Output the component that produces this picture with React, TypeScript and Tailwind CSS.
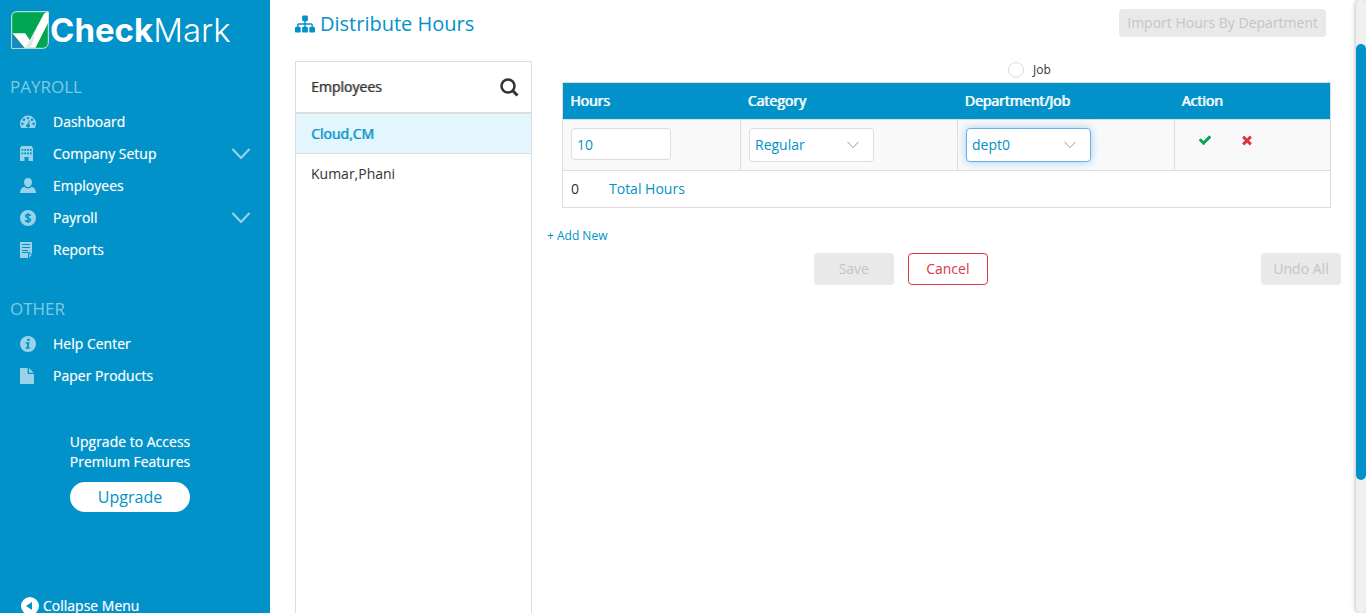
import { useState, type ReactNode } from "react";

const CHECK =
  "M1671 566q0 40-28 68l-724 724-136 136q-28 28-68 28t-68-28l-136-136-362-362q-28-28-28-68t28-68l136-136q28-28 68-28t68 28l294 295 656-657q28-28 68-28t68 28l136 136q28 28 28 68z";
const TIMES =
  "M1490 1322q0 40-28 68l-136 136q-28 28-68 28t-68-28l-294-294-294 294q-28 28-68 28t-68-28l-136-136q-28-28-28-68t28-68l294-294-294-294q-28-28-28-68t28-68l136-136q28-28 68-28t68 28l294 294 294-294q28-28 68-28t68 28l136 136q28 28 28 68t-28 68l-294 294 294 294q28 28 28 68z";
const SITEMAP =
  "M1792 1248v320q0 40-28 68t-68 28h-320q-40 0-68-28t-28-68v-320q0-40 28-68t68-28h96v-192h-512v192h96q40 0 68 28t28 68v320q0 40-28 68t-68 28h-320q-40 0-68-28t-28-68v-320q0-40 28-68t68-28h96v-192h-512v192h96q40 0 68 28t28 68v320q0 40-28 68t-68 28h-320q-40 0-68-28t-28-68v-320q0-40 28-68t68-28h96v-192q0-52 38-90t90-38h512v-192h-96q-40 0-68-28t-28-68v-320q0-40 28-68t68-28h320q40 0 68 28t28 68v320q0 40-28 68t-68 28h-96v192h512q52 0 90 38t38 90v192h96q40 0 68 28t28 68z";

function Glyph({ d, className }: { d: string; className: string }) {
  return (
    <svg viewBox="0 0 1792 1792" fill="currentColor" aria-hidden="true" className={className}>
      <path d={d} />
    </svg>
  );
}

function Chevron({ className }: { className: string }) {
  return (
    <svg viewBox="0 0 18 12" fill="none" stroke="currentColor" strokeLinecap="round" strokeLinejoin="round" aria-hidden="true" className={className}>
      <path d="M1 1.5l8 8.5 8-8.5" />
    </svg>
  );
}

function NavIcon({ children }: { children: ReactNode }) {
  return (
    <svg viewBox="0 0 16 16" aria-hidden="true" className="size-4 shrink-0 text-[#99d3e9]" fill="currentColor">
      {children}
    </svg>
  );
}

const INK = "#0092c9";

const dashboardIcon = (
  <NavIcon>
    <path d="M8 1.6A8 8 0 0 0 0 9.6c0 1.7.5 3.2 1.3 4.5h13.4A8.300 8.300 0 0 0 16 9.600a8 8 0 0 0-8-8z" />
    <g fill={INK}>
      <circle cx="2.4" cy="9.7" r="1.2" />
      <circle cx="4" cy="5.8" r="1.2" />
      <circle cx="8" cy="4.1" r="1.2" />
      <circle cx="12" cy="5.8" r="1.2" />
      <circle cx="13.6" cy="9.7" r="1.2" />
      <path d="M9 6.200l.9.200-.8 3.700a1.900 1.900 0 1 1-1.200-.3z" />
    </g>
  </NavIcon>
);
const companyIcon = (
  <NavIcon>
    <path d="M1 0h11v1.500h1V15H8.500v-4h-4v4H0V1.500h1z" />
    <g fill={INK}>
      <path d="M1.500 3h1.800v1.700H1.500zM4.300 3h1.800v1.700H4.300zM7.100 3h1.800v1.700H7.100zM9.900 3h1.800v1.700H9.900zM1.500 6.500h1.800v1.700H1.500zM4.300 6.500h1.800v1.700H4.300zM7.100 6.500h1.800v1.700H7.100zM9.900 6.500h1.800v1.700H9.900z" />
    </g>
  </NavIcon>
);
const personIcon = (
  <NavIcon>
    <path d="M8 0C5.600 0 4 1.600 4 4.200 4 6.800 5.700 9 8 9s4-2.200 4-4.800C12 1.600 10.400 0 8 0zM4.300 8.800C1.800 9.500.3 11.500 0 15h16c-.3-3.500-1.800-5.500-4.300-6.200C10.700 9.800 9.500 10.300 8 10.300s-2.700-.5-3.700-1.500z" />
  </NavIcon>
);
const dollarIcon = (
  <NavIcon>
    <circle cx="8" cy="8" r="8" />
    <path d="M10.500 6c-.3-1-1.200-1.600-2.500-1.600S5.600 5 5.600 6.100C5.600 8.600 10.500 7.200 10.500 9.900c0 1.100-1.100 1.700-2.500 1.700s-2.500-.6-2.700-1.700M8 3v10" fill="none" stroke={INK} strokeWidth="1.5" />
  </NavIcon>
);
const reportIcon = (
  <NavIcon>
    <path d="M0 0h12v11.500H8V16H0zM9 12.500h3.200L9 15.800z" />
    <path d="M2 2.500h8M2 5.500h8M2 8.500h6M2 10.500h8" stroke={INK} fill="none" />
  </NavIcon>
);
const infoIcon = (
  <NavIcon>
    <circle cx="8" cy="8" r="8" />
    <path d="M7.300 2.800h2.400v2.300H7.300zM5.800 6.300h3.700l-.9 4.900h1.200v1.500H5.700v-1.500h1l.6-3.400H5.800z" fill={INK} />
  </NavIcon>
);
const paperIcon = (
  <NavIcon>
    <path d="M1 0h6.700v6H14v9.200a.8.800 0 0 1-.8.800H.8a.8.800 0 0 1-.8-.8V1a1 1 0 0 1 1-1zM9 0l4.700 4.800H9z" />
  </NavIcon>
);

function NavItem({ icon, label, expandable }: { icon: ReactNode; label: string; expandable?: boolean }) {
  return (
    <li>
      <a href="#" className="flex h-8 items-center pr-5 pl-5">
        {icon}
        <span className="ml-[17px] flex-1 [text-shadow:0_0_1px_rgba(255,255,255,0.5)]">{label}</span>
        {expandable && <Chevron className="h-3 w-[18px] stroke-2 text-[#99d3e9]" />}
      </a>
    </li>
  );
}

function Logo() {
  return (
    <a href="#" aria-label="CheckMark" className="flex h-[38px] items-center pl-[11px]">
      <svg viewBox="0 0 38 38" aria-hidden="true" className="size-[38px] shrink-0">
        <path d="M6 .7h31.300V31c0 4-2 6.300-6 6.300H.7V6C.7 2.500 2.500.7 6 .7z" fill="#00a651" stroke="#d5f0e0" />
        <path d="M1.200 23v13.800H13z" fill="#1b87c9" />
        <path d="M1.500 22.300h12.700l4.700 7L32 4.500C33 2.300 34.500 1 37.300 1v10.500L24.500 36.800h-11z" fill="#fff" />
        <path d="M18.900 29.300l4.500-8.500c.5 6-1.400 12-4.500 16h-5z" fill="#e3e6e8" />
      </svg>
      <span className="ml-px font-['Inter',sans-serif] text-[33px] leading-[38px] text-white">
        <span className="font-bold">Check</span>
        <span className="font-light">Mark</span>
      </span>
    </a>
  );
}

function Sidebar() {
  return (
    <aside className="flex w-[270px] shrink-0 flex-col bg-[#0092c9] pt-[11px] text-sm text-white">
      <Logo />
      <nav className="mt-[26px]">
        <h2 className="pl-2.5 text-[17px] leading-6 text-[#80c9e4]">PAYROLL</h2>
        <ul className="mt-[7px]">
          <NavItem icon={dashboardIcon} label="Dashboard" />
          <NavItem icon={companyIcon} label="Company Setup" expandable />
          <NavItem icon={personIcon} label="Employees" />
          <NavItem icon={dollarIcon} label="Payroll" expandable />
          <NavItem icon={reportIcon} label="Reports" />
        </ul>
        <h2 className="mt-[31px] pl-2.5 text-[17px] leading-6 text-[#80c9e4]">OTHER</h2>
        <ul className="mt-[7px]">
          <NavItem icon={infoIcon} label="Help Center" />
          <NavItem icon={paperIcon} label="Paper Products" />
        </ul>
      </nav>
      <div className="mt-10 mr-2.5 flex flex-col items-center">
        <p className="text-center leading-5 [text-shadow:0_0_1px_rgba(255,255,255,0.5)]">
          Upgrade to Access
          <br />
          Premium Features
        </p>
        <button type="button" className="mt-2.5 h-[30px] w-[120px] rounded-full bg-white text-base text-[#0092c9]">
          Upgrade
        </button>
      </div>
      <button type="button" className="mt-auto -mb-0.5 flex h-[18px] shrink-0 items-center pl-[21px] leading-[18px] [text-shadow:0_0_1px_rgba(255,255,255,0.5)]">
        <svg viewBox="0 0 18 18" aria-hidden="true" className="mr-1 size-[18px]">
          <circle cx="9" cy="9" r="9" fill="#fff" />
          <path d="M11 5v8L5 9z" fill={INK} />
        </svg>
        Collapse Menu
      </button>
    </aside>
  );
}

function SelectBox({ label, value, focused }: { label: string; value: string; focused?: boolean }) {
  return (
    <div className="relative w-[125px]">
      <select
        aria-label={label}
        defaultValue={value}
        className={
          focused
            ? "h-[34px] w-full appearance-none rounded border border-[#66afe9] bg-white pr-8 pl-[5px] text-sm text-[#0092c9] shadow-[0_0_8px_rgba(102,175,233,0.6)] outline-none"
            : "h-[34px] w-full appearance-none rounded border border-[#ddd] bg-white pr-8 pl-[5px] text-sm text-[#0092c9] outline-none"
        }
      >
        <option>{value}</option>
      </select>
      <Chevron className="pointer-events-none absolute top-[13px] right-[15px] h-2 w-3 stroke-[1.5] text-[#999]" />
    </div>
  );
}

const th = "h-[37px] px-[7px] text-left font-normal [text-shadow:1px_0_0_rgba(255,255,255,0.9)]";
const td = "h-[51px] border border-[#ddd] px-2 pt-2 align-top";

function HoursTable() {
  return (
    <table className="w-full table-fixed border-collapse border border-[#ddd] text-sm">
      <colgroup>
        <col className="w-[178px]" />
        <col className="w-[217px]" />
        <col className="w-[217px]" />
        <col />
      </colgroup>
      <thead>
        <tr className="bg-[#0092c9] text-white">
          <th className={th}>Hours</th>
          <th className={th}>Category</th>
          <th className={th}>Department/Job</th>
          <th className={th}>Action</th>
        </tr>
      </thead>
      <tbody>
        <tr className="bg-[#f9f9f9]">
          <td className={td}>
            <input aria-label="Hours" defaultValue="10" className="block h-8 w-[100px] rounded border border-[#ddd] bg-white px-[5px] text-[#0092c9] outline-none" />
          </td>
          <td className={td}>
            <SelectBox label="Category" value="Regular" />
          </td>
          <td className={td}>
            <SelectBox label="Department/Job" value="dept0" focused />
          </td>
          <td className={td}>
            <div className="flex h-6 items-center gap-7 pl-[15px]">
              <button type="button" aria-label="Accept">
                <Glyph d={CHECK} className="size-3.5 text-[#00a651]" />
              </button>
              <button type="button" aria-label="Remove">
                <Glyph d={TIMES} className="size-3.5 text-[#dc3545]" />
              </button>
            </div>
          </td>
        </tr>
        <tr>
          <td colSpan={4} className="h-[37px] px-2">
            <span className="inline-block w-[38px] text-[#333]">0</span>
            <span className="text-[#0092c9]">Total Hours</span>
          </td>
        </tr>
      </tbody>
    </table>
  );
}

const disabledButton = "rounded bg-[#e9e9e9] text-sm text-[#c5c5c5]";

export default function App() {
  const [job, setJob] = useState(false);
  return (
    <div className="flex h-screen min-h-[600px] overflow-hidden bg-white font-['Open_Sans',sans-serif] text-[#333]">
      <Sidebar />
      <main className="flex min-w-0 flex-1 flex-col pl-[25px]">
        <header className="flex h-[61px] shrink-0 items-start justify-between pt-[9px] pr-[30px]">
          <h1 className="flex items-center text-xl leading-[30px] text-[#0092c9]">
            <Glyph d={SITEMAP} className="mr-[5px] size-5" />
            Distribute Hours
          </h1>
          <button type="button" disabled className={`${disabledButton} h-7 px-2`}>
            Import Hours By Department
          </button>
        </header>
        <div className="flex min-h-0 flex-1">
          <section className="flex w-[237px] shrink-0 flex-col border-x border-t border-[#ddd] text-sm">
            <div className="flex h-[52px] shrink-0 items-center justify-between border-b-2 border-[#ddd] pr-3 pl-[15px]">
              <h2 className="[text-shadow:1px_0_0_rgba(51,51,51,0.5)]">Employees</h2>
              <button type="button" aria-label="Search employees">
                <svg viewBox="0 0 19 19" fill="none" stroke="currentColor" strokeWidth="2.5" aria-hidden="true" className="size-[19px]">
                  <circle cx="8" cy="8" r="6.5" />
                  <path d="M12.500 12.500l5 5" strokeWidth="3" />
                </svg>
              </button>
            </div>
            <ul>
              <li className="border-b border-[#ddd] bg-[#e3f6fd]">
                <button type="button" className="block h-[39px] w-full px-[15px] text-left text-[#0092c9] [text-shadow:1px_0_0_rgba(0,146,201,0.6)]">
                  Cloud,CM
                </button>
              </li>
              <li>
                <button type="button" className="block h-10 w-full px-[15px] text-left">
                  Kumar,Phani
                </button>
              </li>
            </ul>
          </section>
          <section className="min-w-0 flex-1 pr-[15px] pl-[15px]">
            <div className="pr-2.5 pl-[15px]">
              <div className="flex h-[21px] items-start pl-[58%]">
                <label className="flex h-[17px] items-center gap-[9px] text-xs">
                  <input type="radio" checked={job} onChange={() => setJob(true)} className="size-4 appearance-none rounded-full border border-[#ddd] bg-white checked:bg-[#0092c9]" />
                  Job
                </label>
              </div>
              <HoursTable />
            </div>
            <a href="#" className="mt-[19px] block w-fit text-xs leading-[18px] text-[#0092c9]">
              + Add New
            </a>
            <div className="mt-2 flex items-center gap-3.5 pl-[33.6%]">
              <button type="button" disabled className={`${disabledButton} h-8 w-20`}>
                Save
              </button>
              <button type="button" className="h-8 w-20 rounded border border-[#dc3545] bg-white text-sm text-[#dc3545]">
                Cancel
              </button>
              <button type="button" disabled className={`${disabledButton} ml-auto h-8 w-20`}>
                Undo All
              </button>
            </div>
          </section>
        </div>
      </main>
      <div aria-hidden="true" className="flex w-2.5 shrink-0 flex-col rounded-full bg-[#f0f0f0] pt-11 shadow-[0_0_5px_rgba(0,0,0,0.35)]">
        <div className="h-[76.6%] rounded-full bg-[#0092c9]" />
      </div>
    </div>
  );
}
